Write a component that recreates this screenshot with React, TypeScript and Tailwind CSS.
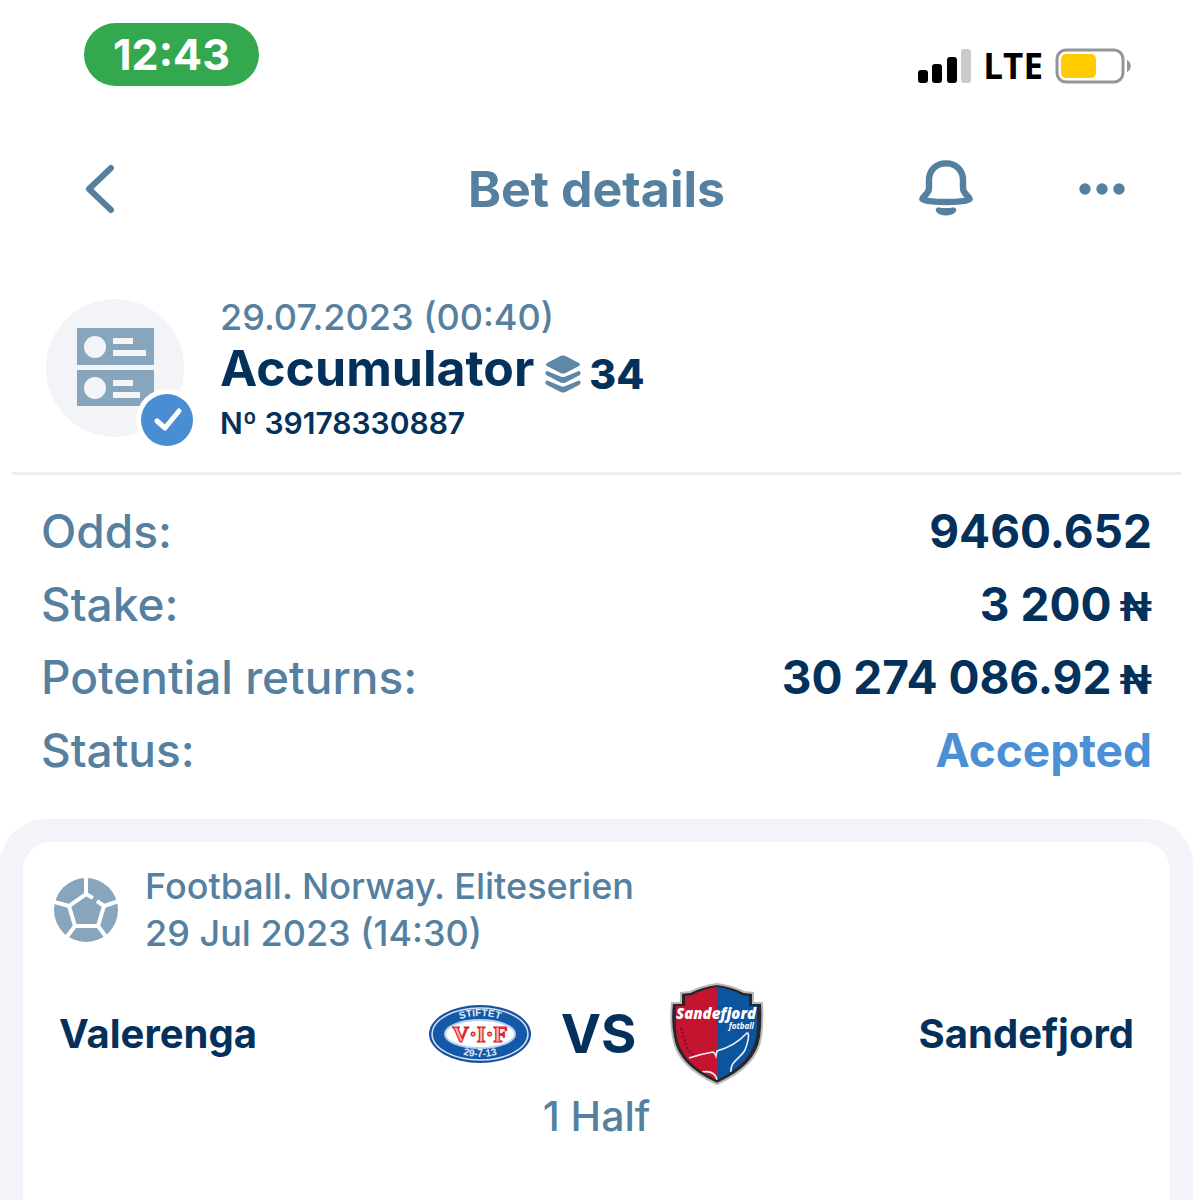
import React from 'react';

interface Stat {
  label: string;
  value: string;
  currency?: string;
  accent?: boolean;
}

const stats: Stat[] = [
  { label: 'Odds:', value: '9460.652' },
  { label: 'Stake:', value: '3 200', currency: '₦' },
  { label: 'Potential returns:', value: '30 274 086.92', currency: '₦' },
  { label: 'Status:', value: 'Accepted', accent: true },
];

const StatusBar: React.FC = () => (
  <div className="flex items-start justify-between pl-[84px] pr-[61px] pt-[23px]">
    <div className="flex h-[63px] w-[175px] items-center justify-center rounded-full bg-[#34a84f] text-[43px] font-bold text-white">
      12:43
    </div>
    <div className="flex items-center gap-3 pt-[23px]">
      <svg width="53" height="34" viewBox="0 0 53 34" aria-hidden="true">
        <rect x="0" y="21" width="10" height="13" rx="3" />
        <rect x="14" y="15" width="10" height="19" rx="3" />
        <rect x="29" y="8" width="10" height="26" rx="3" />
        <rect x="43" y="0" width="10" height="34" rx="3" fill="#cbcbcb" />
      </svg>
      <span className="font-['Open_Sans','Noto_Sans',sans-serif] text-[35px] leading-10 font-bold text-black">LTE</span>
      <svg width="77" height="36" viewBox="0 0 77 36" aria-hidden="true">
        <rect x="2" y="2" width="66" height="32" rx="9" fill="none" stroke="#959595" strokeWidth="3" />
        <rect x="6" y="6" width="35" height="24" rx="5" fill="#fc0" />
        <path d="M72 12c5 2 5 10 0 12z" fill="#959595" />
      </svg>
    </div>
  </div>
);

const Header: React.FC = () => (
  <header className="grid grid-cols-[1fr_auto_1fr] items-center px-[66px] pt-[63px] text-[#5580a0]">
    <button type="button" aria-label="Back" className="justify-self-start pl-[18px]">
      <svg width="32" height="50" viewBox="0 0 32 50" fill="none" stroke="currentColor" strokeWidth="6" strokeLinecap="round" strokeLinejoin="round">
        <path d="M27 4L5 25l22 21" />
      </svg>
    </button>
    <h1 className="text-[50px] leading-[80px] font-bold">Bet details</h1>
    <div className="flex items-center justify-end gap-[104px]">
      <button type="button" aria-label="Notifications">
        <svg width="54" height="58" viewBox="0 0 54 58" fill="none" stroke="currentColor" strokeWidth="6.4" strokeLinejoin="round" strokeLinecap="round">
          <path d="M27 3.400C16.500 3.400 10 10.500 10 20v8c0 6-6.700 8.500-6.700 11 0 1.500 10.600 3 23.700 3s23.700-1.500 23.700-3c0-2.500-6.700-5-6.700-11v-8C44 10.500 37.500 3.400 27 3.400z" />
          <path d="M20 47.500q7 1.200 14 0c3-.4 4.200 2.300 2.400 4.600-3 4.600-15.800 4.600-18.800 0-1.800-2.300-.6-5 2.400-4.600z" fill="currentColor" stroke="none" />
        </svg>
      </button>
      <button type="button" aria-label="More">
        <svg width="50" height="12" viewBox="0 0 50 12" fill="currentColor">
          <circle cx="8" cy="6" r="5.700" />
          <circle cx="25" cy="6" r="5.700" />
          <circle cx="42" cy="6" r="5.700" />
        </svg>
      </button>
    </div>
  </header>
);

const CouponIcon: React.FC = () => (
  <svg width="150" height="150" viewBox="0 0 150 150" aria-hidden="true" className="shrink-0">
    <circle cx="69" cy="69" r="69" fill="#f3f4f8" />
    <path d="M31 29h77v37H31zM31 71h77v36H31z" fill="#87a5bd" />
    <g fill="#f3f4f8">
      <circle cx="49" cy="48" r="11" />
      <circle cx="49" cy="89" r="11" />
      <path d="M67 39h20v6H67zM67 51h33v6H67zM67 81h20v6H67zM67 93h27v6H67z" />
    </g>
    <circle cx="121" cy="121" r="31" fill="#fff" />
    <circle cx="121" cy="121" r="26" fill="#498dd3" />
    <path d="M111 122l8 7 14-17" fill="none" stroke="#fff" strokeWidth="5" strokeLinecap="round" strokeLinejoin="round" />
  </svg>
);

const LayersIcon: React.FC = () => (
  <svg width="36" height="38" viewBox="0 0 36 38" fill="#5f87a6" aria-hidden="true">
    <path d="M15.500 1q2.500-1.200 5 0L33.500 7.700q3 1.800 0 3.600L20.500 18q-2.500 1.200-5 0L2.500 11.300q-3-1.800 0-3.600z" />
    <path d="M1 16.500q1-.9 3 .2l11.500 4.800q2.500 1.200 5 0l11.500-4.800q2-1.100 3-.2 1.500 2.500-1 4l-13.500 7q-2.500 1.200-5 0L2 20.500Q-.5 19 1 16.500z" />
    <path d="M1 26q1-.9 3 .2L15.500 31q2.500 1.200 5 0L32 26.200q2-1.100 3-.2 1.500 2.500-1 4l-13.500 7q-2.500 1.200-5 0L2 30Q-.5 28.500 1 26z" />
  </svg>
);

const BallIcon: React.FC = () => (
  <svg width="64" height="64" viewBox="0 0 64 64" aria-hidden="true" className="shrink-0">
    <circle cx="32" cy="32" r="32" fill="#87a5bd" />
    <g fill="none" stroke="#fff" strokeWidth="4">
      <path d="M39 20l-7-4-17 12 6 20h23l6-20-7-5" />
      <path d="M32 0v16M15 28L0 24M50 28l15-5M21 48l-9 12M44 48l9 12" />
    </g>
  </svg>
);

const VifLogo: React.FC = () => (
  <svg width="102" height="60" viewBox="0 0 102 60" role="img" aria-label="Valerenga">
    <defs>
      <path id="vif-top" d="M15 32A36 20 0 0 1 87 32" />
      <path id="vif-bottom" d="M11 30A40 23 0 0 0 91 30" />
    </defs>
    <ellipse cx="51" cy="30" rx="51" ry="29" fill="#174f9b" />
    <ellipse cx="51" cy="30" rx="48" ry="26" fill="#1458a8" stroke="#cfe2f5" strokeWidth="1.500" />
    <ellipse cx="51" cy="30" rx="35" ry="14" fill="#fff" stroke="#b5d4ef" strokeWidth="2" />
    <g fill="#e4edf8" fontFamily="Liberation Sans, sans-serif" fontWeight="700" fontSize="10" textAnchor="middle">
      <text><textPath href="#vif-top" startOffset="50%">STIFTET</textPath></text>
      <text><textPath href="#vif-bottom" startOffset="50%">29-7-13</textPath></text>
    </g>
    <text x="51" y="38" textAnchor="middle" fontFamily="Liberation Serif, serif" fontWeight="700" fontSize="23" fill="#f6b9bb" stroke="#dd2029" strokeWidth="1.200">V·I·F</text>
  </svg>
);

const SandefjordLogo: React.FC = () => (
  <svg width="94" height="102" viewBox="0 0 94 102" role="img" aria-label="Sandefjord">
    <defs>
      <clipPath id="shield">
        <path d="M47 4q14 2 25 8l7 1v10h8q1 19-1 31-4 26-39 43Q11 80 7 54 5 42 6 23h9V13l7-1q11-6 25-8z" />
      </clipPath>
    </defs>
    <path d="M47 1q15 2 27 8l9 1v10h9q1 20-1 34-4 29-44 47Q7 83 3 54 0 40 2 20h9V10l9-1q12-6 27-8z" fill="#26262c" stroke="#b9b9b9" strokeWidth="2" />
    <g clipPath="url(#shield)">
      <path d="M0 0h47v102H0z" fill="#c4142f" />
      <path d="M47 0h47v102H47z" fill="#0b559f" />
      <path d="M19 75q12-4 24-6 2 1 3 4l1-5q18-5 30-18c3-1 1 10-2 17-5 9-15 11-14 22M32 89q13-2 15 8" fill="none" stroke="#f3edf2" strokeWidth="1.600" />
    </g>
    <path d="M11 45l6 20 7 8" fill="none" stroke="#751022" strokeWidth="2" strokeDasharray="2 2" />
    <text x="46" y="36" textAnchor="middle" fontFamily="Open Sans, sans-serif" fontStyle="italic" fontWeight="800" fontSize="15" fill="#fff">Sandefjord</text>
    <text x="84" y="46" textAnchor="end" fontFamily="Open Sans, sans-serif" fontStyle="italic" fontWeight="700" fontSize="8" fill="#fff">fotball</text>
  </svg>
);

const StatRow: React.FC<{ stat: Stat }> = ({ stat }) => (
  <div className="flex h-[73px] items-center justify-between">
    <dt className="font-medium text-[#5580a0]">{stat.label}</dt>
    <dd className={stat.accent ? 'font-bold text-[#4b8fd4]' : 'font-bold text-[#03315c]'}>
      {stat.value}
      {stat.currency && <span className="ml-2 font-[Roboto,sans-serif] text-[40px] leading-none">{stat.currency}</span>}
    </dd>
  </div>
);

export default function App() {
  return (
    <div className="flex min-h-screen flex-col bg-white font-[Inter,sans-serif] text-[#03315c]">
      <StatusBar />
      <Header />

      <section className="mx-3 flex gap-6 border-b-[3px] border-[#ebedf0] pb-[23px] pl-[34px] pt-[70px]">
        <CouponIcon />
        <div className="flex flex-col">
          <p className="text-[36px] leading-[36px] font-medium text-[#5580a0]">29.07.2023 (00:40)</p>
          <div className="flex items-center">
            <h2 className="text-[50px] leading-[66px] font-bold">Accumulator</h2>
            <span className="ml-[11px] flex items-center gap-2 pt-3 text-[41px] leading-10 font-extrabold">
              <LayersIcon />
              34
            </span>
          </div>
          <p className="text-[30px] leading-[44px] font-semibold">Nº 39178330887</p>
        </div>
      </section>

      <dl className="px-[41px] pb-8 pt-5 text-[46px]">
        {stats.map((stat) => (
          <StatRow key={stat.label} stat={stat} />
        ))}
      </dl>

      <main className="flex flex-1 flex-col rounded-t-[46px] bg-[#f3f4f9] px-[23px] pt-[23px]">
        <article className="flex-1 rounded-t-[28px] bg-white px-[31px] pt-[21px]">
          <div className="flex items-center gap-[27px]">
            <BallIcon />
            <div className="text-[36px] leading-[47px] font-medium text-[#5580a0]">
              <p>Football. Norway. Eliteserien</p>
              <p>29 Jul 2023 (14:30)</p>
            </div>
          </div>
          <div className="mt-[26px] grid grid-cols-[1fr_auto_1fr] items-center px-[5px]">
            <p className="text-[40px] font-bold">Valerenga</p>
            <div className="flex items-center gap-[30px]">
              <VifLogo />
              <span className="mr-1 text-[54px] leading-none font-bold">VS</span>
              <SandefjordLogo />
            </div>
            <p className="text-right text-[40px] font-bold">Sandefjord</p>
          </div>
          <p className="mt-1 text-center text-[41px] leading-[54px] font-medium text-[#5580a0]">1 Half</p>
        </article>
      </main>
    </div>
  );
}
